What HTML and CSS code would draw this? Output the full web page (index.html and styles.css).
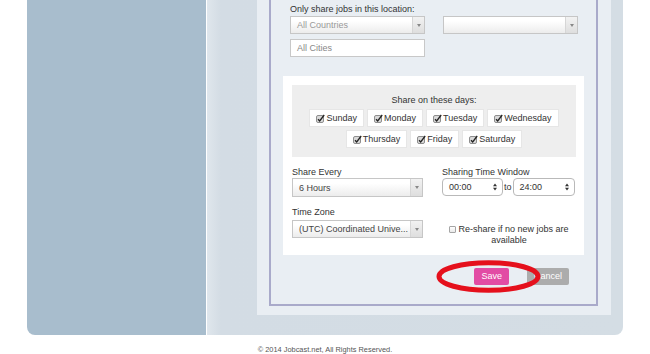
FILE: index.html
```html
<!DOCTYPE html>
<html lang="en">
<head>
    <meta charset="UTF-8">
    <meta name="viewport" content="width=device-width, initial-scale=1.0">
    <title>Jobcast - Sharing Settings</title>
    <link rel="stylesheet" href="styles.css">
</head>
<body>
    <div class="page">
        <div class="sidebar"></div>
        <div class="main">
            <div class="panel">
                <form class="share-form">
                    <div class="location">
                        <label class="field-label">Only share jobs in this location:</label>
                        <div class="location-row">
                            <div class="chosen placeholder"><span>All Countries</span><b class="chosen-arrow"></b></div>
                            <div class="chosen"><span></span><b class="chosen-arrow"></b></div>
                        </div>
                        <div class="text-input placeholder">All Cities</div>
                    </div>

                    <div class="settings">
                        <div class="days">
                            <div class="days-title">Share on these days:</div>
                            <div class="days-row">
                                <span class="day"><svg class="tick" viewBox="0 0 9 9"><rect x="0.5" y="1.5" width="7" height="7" rx="1.5" fill="#dadada" stroke="#8e8e8e"/><path d="M2 5.2 L3.7 7 L8.2 1" fill="none" stroke="#222" stroke-width="1.3"/></svg>Sunday</span>
                                <span class="day"><svg class="tick" viewBox="0 0 9 9"><rect x="0.5" y="1.5" width="7" height="7" rx="1.5" fill="#dadada" stroke="#8e8e8e"/><path d="M2 5.2 L3.7 7 L8.2 1" fill="none" stroke="#222" stroke-width="1.3"/></svg>Monday</span>
                                <span class="day"><svg class="tick" viewBox="0 0 9 9"><rect x="0.5" y="1.5" width="7" height="7" rx="1.5" fill="#dadada" stroke="#8e8e8e"/><path d="M2 5.2 L3.7 7 L8.2 1" fill="none" stroke="#222" stroke-width="1.3"/></svg>Tuesday</span>
                                <span class="day"><svg class="tick" viewBox="0 0 9 9"><rect x="0.5" y="1.5" width="7" height="7" rx="1.5" fill="#dadada" stroke="#8e8e8e"/><path d="M2 5.2 L3.7 7 L8.2 1" fill="none" stroke="#222" stroke-width="1.3"/></svg>Wednesday</span>
                            </div>
                            <div class="days-row">
                                <span class="day"><svg class="tick" viewBox="0 0 9 9"><rect x="0.5" y="1.5" width="7" height="7" rx="1.5" fill="#dadada" stroke="#8e8e8e"/><path d="M2 5.2 L3.7 7 L8.2 1" fill="none" stroke="#222" stroke-width="1.3"/></svg>Thursday</span>
                                <span class="day"><svg class="tick" viewBox="0 0 9 9"><rect x="0.5" y="1.5" width="7" height="7" rx="1.5" fill="#dadada" stroke="#8e8e8e"/><path d="M2 5.2 L3.7 7 L8.2 1" fill="none" stroke="#222" stroke-width="1.3"/></svg>Friday</span>
                                <span class="day"><svg class="tick" viewBox="0 0 9 9"><rect x="0.5" y="1.5" width="7" height="7" rx="1.5" fill="#dadada" stroke="#8e8e8e"/><path d="M2 5.2 L3.7 7 L8.2 1" fill="none" stroke="#222" stroke-width="1.3"/></svg>Saturday</span>
                            </div>
                        </div>

                        <div class="schedule">
                            <div class="col">
                                <label class="field-label">Share Every</label>
                                <div class="chosen tall"><span>6 Hours</span><b class="chosen-arrow"></b></div>
                                <label class="field-label spaced">Time Zone</label>
                                <div class="chosen"><span>(UTC) Coordinated Unive...</span><b class="chosen-arrow"></b></div>
                            </div>
                            <div class="col">
                                <label class="field-label">Sharing Time Window</label>
                                <div class="time-row">
                                    <div class="time">00:00<svg class="spin" viewBox="0 0 5 9"><path d="M2.5 0 L5 3.6 H0 Z M2.5 9 L0 5.4 H5 Z" fill="#333"/></svg></div>
                                    <span class="to">to</span>
                                    <div class="time wide">24:00<svg class="spin" viewBox="0 0 5 9"><path d="M2.5 0 L5 3.6 H0 Z M2.5 9 L0 5.4 H5 Z" fill="#333"/></svg></div>
                                </div>
                                <div class="reshare"><span class="box"></span>Re-share if no new jobs are available</div>
                            </div>
                        </div>
                    </div>

                    <div class="actions">
                        <span class="btn save">Save</span>
                        <span class="btn cancel">Cancel</span>
                        <svg class="highlight" viewBox="0 0 105 33"><ellipse cx="52.5" cy="16.5" rx="49.5" ry="13.8" fill="none" stroke="#e5101c" stroke-width="5"/></svg>
                    </div>
                </form>
            </div>
        </div>
    </div>
    <div class="footer">&copy; 2014 Jobcast.net, All Rights Reserved.</div>
</body>
</html>
```

FILE: styles.css
```css
html, body {
    margin: 0;
    padding: 0;
    overflow: hidden;
}
body {
    background: #fff;
    font-family: "Liberation Sans", Arial, sans-serif;
    font-size: 9px;
    color: #333;
}
.page {
    width: 596px;
    height: 335px;
    margin: 0 auto;
    display: flex;
    border-radius: 0 0 8px 8px;
    overflow: hidden;
}
.sidebar {
    width: 179px;
    background: #a8bdcd;
}
.main {
    flex: 1;
    display: flex;
    border-left: 1px solid #fff;
    padding: 0 12px 20px 50px;
    background: linear-gradient(to right, #dfe6ec, #d3dce4 14px, #d4dde4);
}
.panel {
    flex: 1;
    display: flex;
    padding: 0 13px 9px 12px;
    background: #e9eef3;
}
.share-form {
    flex: 1;
    margin: 0;
    padding: 0 12px;
    border: 2px solid #a9aaca;
    border-top: 0;
}
.field-label {
    display: block;
    line-height: 12px;
}
.location {
    padding: 0 6px 0 7px;
}
.location .field-label {
    margin-top: 3px;
}
.location-row {
    display: flex;
    gap: 18px;
    margin-top: 1px;
}
.chosen {
    box-sizing: border-box;
    height: 18px;
    display: flex;
    align-items: center;
    border: 1px solid #c6c6c6;
    background: linear-gradient(#fff 25%, #ececec);
    color: #444;
}
.location .chosen {
    width: 135px;
}
.chosen.tall {
    height: 19px;
}
.chosen span {
    flex: 1;
    padding-left: 6px;
    white-space: nowrap;
    overflow: hidden;
}
.chosen-arrow {
    width: 11px;
    align-self: stretch;
    display: flex;
    align-items: center;
    justify-content: center;
    border-left: 1px solid #d6d6d6;
    background: linear-gradient(#f2f2f2, #dedede);
}
.chosen-arrow::after {
    content: "";
    border-left: 2px solid transparent;
    border-right: 2px solid transparent;
    border-top: 3px solid #888;
}
.placeholder {
    color: #999;
}
.text-input {
    box-sizing: border-box;
    width: 135px;
    height: 18px;
    margin-top: 5px;
    padding-left: 6px;
    line-height: 16px;
    border: 1px solid #c8c8c8;
    background: #fff;
    color: #888;
}
.settings {
    margin-top: 19px;
    padding: 9px 8px 9px 9px;
    background: #fff;
}
.days {
    padding: 9px 0;
    background: #eee;
    text-align: center;
}
.days-title {
    line-height: 12px;
}
.days-row {
    display: flex;
    justify-content: center;
    gap: 3px;
    margin-top: 3px;
}
.day {
    box-sizing: border-box;
    height: 18px;
    display: flex;
    align-items: center;
    gap: 1px;
    padding: 0 6px;
    border: 1px solid #e6e6e6;
    background: #fff;
}
.tick {
    width: 9px;
    height: 9px;
}
.schedule {
    display: grid;
    grid-template-columns: 131px 1fr;
    column-gap: 19px;
    margin-top: 9px;
}
.field-label.spaced {
    margin-top: 9px;
}
.field-label.spaced + .chosen {
    margin-top: 2px;
}
.time-row {
    display: flex;
    align-items: center;
}
.time {
    box-sizing: border-box;
    width: 61px;
    height: 18px;
    display: flex;
    align-items: center;
    justify-content: space-between;
    padding: 0 5px 0 6px;
    border: 1px solid #b9b9b9;
    border-radius: 4px;
    background: #fff;
    color: #333;
}
.time.wide {
    width: 62px;
}
.spin {
    width: 4px;
    height: 8px;
}
.to {
    margin: 0 1px;
}
.reshare {
    margin-top: 28px;
    line-height: 11px;
    text-align: center;
}
.reshare .box {
    display: inline-block;
    box-sizing: border-box;
    width: 7px;
    height: 7px;
    margin-right: 2px;
    border: 1px solid #a5a5a5;
    border-radius: 1px;
    background: linear-gradient(#fff, #e9e9e9);
    vertical-align: -1px;
}
.actions {
    position: relative;
    display: flex;
    justify-content: flex-end;
    gap: 18px;
    margin-top: 13px;
    padding-right: 15px;
}
.btn {
    height: 17px;
    line-height: 17px;
    padding: 0 7px;
    border-radius: 2px;
    color: #fff;
}
.save {
    background: #e24ca4;
}
.cancel {
    background: #acacac;
}
.highlight {
    position: absolute;
    left: 153px;
    top: -8px;
    width: 105px;
    height: 33px;
}
.footer {
    margin-top: 10px;
    font-size: 7.4px;
    line-height: 10px;
    text-align: center;
    color: #555;
}
```
